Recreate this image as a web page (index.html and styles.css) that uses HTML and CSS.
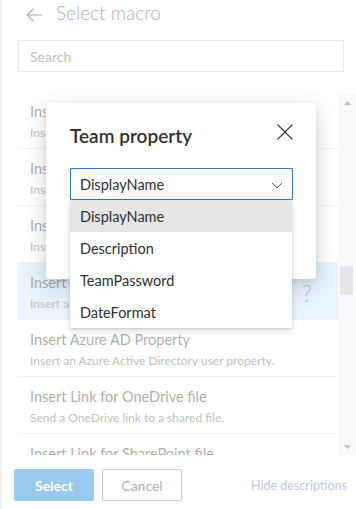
FILE: index.html
```html
<!DOCTYPE html>
<html lang="en">
<head>
<meta charset="utf-8">
<title>Select macro</title>
<link rel="stylesheet" href="styles.css">
</head>
<body>
<div class="page">
  <header class="top">
    <svg class="back" width="16" height="14" viewBox="0 0 16 14"><path d="M16 7H1.2M7.6 0.6L1.2 7l6.4 6.4" fill="none" stroke="#323130" stroke-width="1.1"/></svg>
    <h1 class="top-title">Select macro</h1>
  </header>
  <div class="search"><span>Search</span></div>
  <div class="listwrap">
    <ul class="list">
      <li class="item"><div class="text"><div class="t">Insert Date and Time</div><div class="d">Insert the current date and time.</div></div></li>
      <li class="item"><div class="text"><div class="t">Insert Field</div><div class="d">Insert a fillable field.</div></div></li>
      <li class="item"><div class="text"><div class="t">Insert Text</div><div class="d">Insert text from a template.</div></div></li>
      <li class="item sel"><div class="text"><div class="t">Insert Team property</div><div class="d">Insert a team property.</div></div><span class="help">?</span></li>
      <li class="item"><div class="text"><div class="t">Insert Azure AD Property</div><div class="d">Insert an Azure Active Directory user property.</div></div></li>
      <li class="item"><div class="text"><div class="t">Insert Link for OneDrive file</div><div class="d">Send a OneDrive link to a shared file.</div></div></li>
      <li class="item"><div class="text"><div class="t">Insert Link for SharePoint file</div><div class="d">Send a SharePoint link to a shared file.</div></div></li>
    </ul>
    <div class="scrollbar">
      <div class="sb-btn"><svg width="7" height="4" viewBox="0 0 7 4"><path d="M0 4L3.5 0L7 4Z" fill="#606060"/></svg></div>
      <div class="sb-track"><div class="sb-thumb"></div></div>
      <div class="sb-btn"><svg width="7" height="4" viewBox="0 0 7 4"><path d="M0 0L3.5 4L7 0Z" fill="#606060"/></svg></div>
    </div>
  </div>
  <footer class="footer">
    <button class="btn primary">Select</button>
    <button class="btn">Cancel</button>
    <a class="link">Hide descriptions</a>
  </footer>
</div>
<div class="overlay"></div>
<div class="dialog">
  <div class="dlg-head">
    <h2 class="dlg-title">Team property</h2>
    <svg class="close" width="16" height="16" viewBox="0 0 16 16"><path d="M0.6 0.6L15.4 15.4M15.4 0.6L0.6 15.4" fill="none" stroke="#323130" stroke-width="1.3"/></svg>
  </div>
  <div class="dropdown">
    <span>DisplayName</span>
    <svg width="12" height="12" viewBox="0 0 12 12"><path d="M1 4l5 5 5-5" fill="none" stroke="#605e5c" stroke-width="1"/></svg>
    <ul class="callout">
      <li class="opt on">DisplayName</li>
      <li class="opt">Description</li>
      <li class="opt">TeamPassword</li>
      <li class="opt">DateFormat</li>
    </ul>
  </div>
</div>
</body>
</html>
```
FILE: styles.css
```css
* { box-sizing: border-box; margin: 0; padding: 0; }
html, body { width: 356px; height: 509px; overflow: hidden; }
body {
  position: relative;
  background: #fff;
  color: #323130;
  font-family: Lato, "Segoe UI", "Liberation Sans", sans-serif;
}
.page {
  height: 509px;
  border-left: 2px solid #d6d6d6;
  display: flex;
  flex-direction: column;
}
.top {
  height: 28px;
  display: flex;
  align-items: flex-start;
  padding-left: 24px;
}
.back { margin-top: 8px; flex: none; }
.top-title {
  margin-left: 14px;
  margin-top: 0.5px;
  font-size: 19px;
  font-weight: 300;
  line-height: 23px;
  color: #323130;
}
.search {
  margin: 12px 12px 0 16px;
  height: 32px;
  border: 1px solid #c8c6c4;
  padding-left: 11px;
  display: flex;
  align-items: center;
  font-size: 14px;
  color: #605e5c;
}
.listwrap {
  margin: 20px 0 0 16px;
  height: 363px;
  display: flex;
  overflow: hidden;
}
.list { flex: 1; list-style: none; overflow: hidden; }
.item {
  height: 57px;
  border-bottom: 1px solid #e1dfdd;
  padding: 0 26px 0 12px;
  display: flex;
}
.item.sel { background: #c7e0f4; }
.text { flex: 1; padding-top: 10px; white-space: nowrap; overflow: hidden; }
.t { font-size: 14.5px; line-height: 20px; color: #323130; }
.d { font-size: 12px; line-height: 16px; margin-top: 3px; color: #605e5c; }
.help {
  align-self: center;
  margin-top: 4px;
  font-size: 23px;
  font-weight: 300;
  line-height: 24px;
  color: #605e5c;
}
.scrollbar {
  width: 18px;
  margin-top: 2px;
  background: #f1f1f1;
  display: flex;
  flex-direction: column;
}
.sb-btn { height: 17px; display: flex; align-items: center; justify-content: center; padding-left: 1px; }
.sb-track { flex: 1; padding-top: 155px; }
.sb-thumb { height: 29px; margin: 0 3px 0 2px; background: #c1c1c1; }
.footer {
  display: flex;
  align-items: center;
  padding: 14px 9px 0 12px;
}
.btn {
  width: 80px;
  height: 32px;
  margin-right: 8px;
  border: 1px solid #8a8886;
  border-radius: 2px;
  background: #fff;
  color: #323130;
  font-family: inherit;
  font-size: 14px;
}
.btn.primary {
  background: #0078d4;
  border-color: #0078d4;
  color: #fff;
  font-weight: 700;
}
.link {
  margin-left: auto;
  font-size: 12.5px;
  color: #5b6fd6;
}
.overlay {
  position: absolute;
  inset: 0;
  background: rgba(255, 255, 255, 0.6);
}
.dialog {
  position: absolute;
  left: 46px;
  top: 103px;
  width: 270px;
  height: 176px;
  background: #fff;
  border-radius: 3px;
  box-shadow: 0 8px 24px rgba(0, 0, 0, 0.15), 0 2px 6px rgba(0, 0, 0, 0.1);
  padding: 20px 23px 0 24px;
}
.dlg-head { display: flex; justify-content: space-between; align-items: flex-start; }
.dlg-title { font-size: 19px; font-weight: 600; line-height: 24px; padding-top: 1px; color: #323130; }
.close { margin-top: 1px; }
.dropdown {
  position: relative;
  margin-top: 20px;
  height: 32px;
  border: 1px solid #2b78d0;
  border-radius: 1px;
  display: flex;
  align-items: center;
  justify-content: space-between;
  padding: 1px 9px 0 9px;
  font-size: 14.5px;
  color: #323130;
}
.callout {
  position: absolute;
  left: -1px;
  top: calc(100% + 1px);
  width: 222px;
  list-style: none;
  background: #fff;
  box-shadow: 0 3.2px 7.2px rgba(0, 0, 0, 0.132), 0 0.6px 1.8px rgba(0, 0, 0, 0.108);
}
.opt {
  height: 32px;
  padding: 2px 0 0 10px;
  line-height: 30px;
  font-size: 14.5px;
  color: #323130;
}
.opt.on { background: #e6e6e6; }
```
